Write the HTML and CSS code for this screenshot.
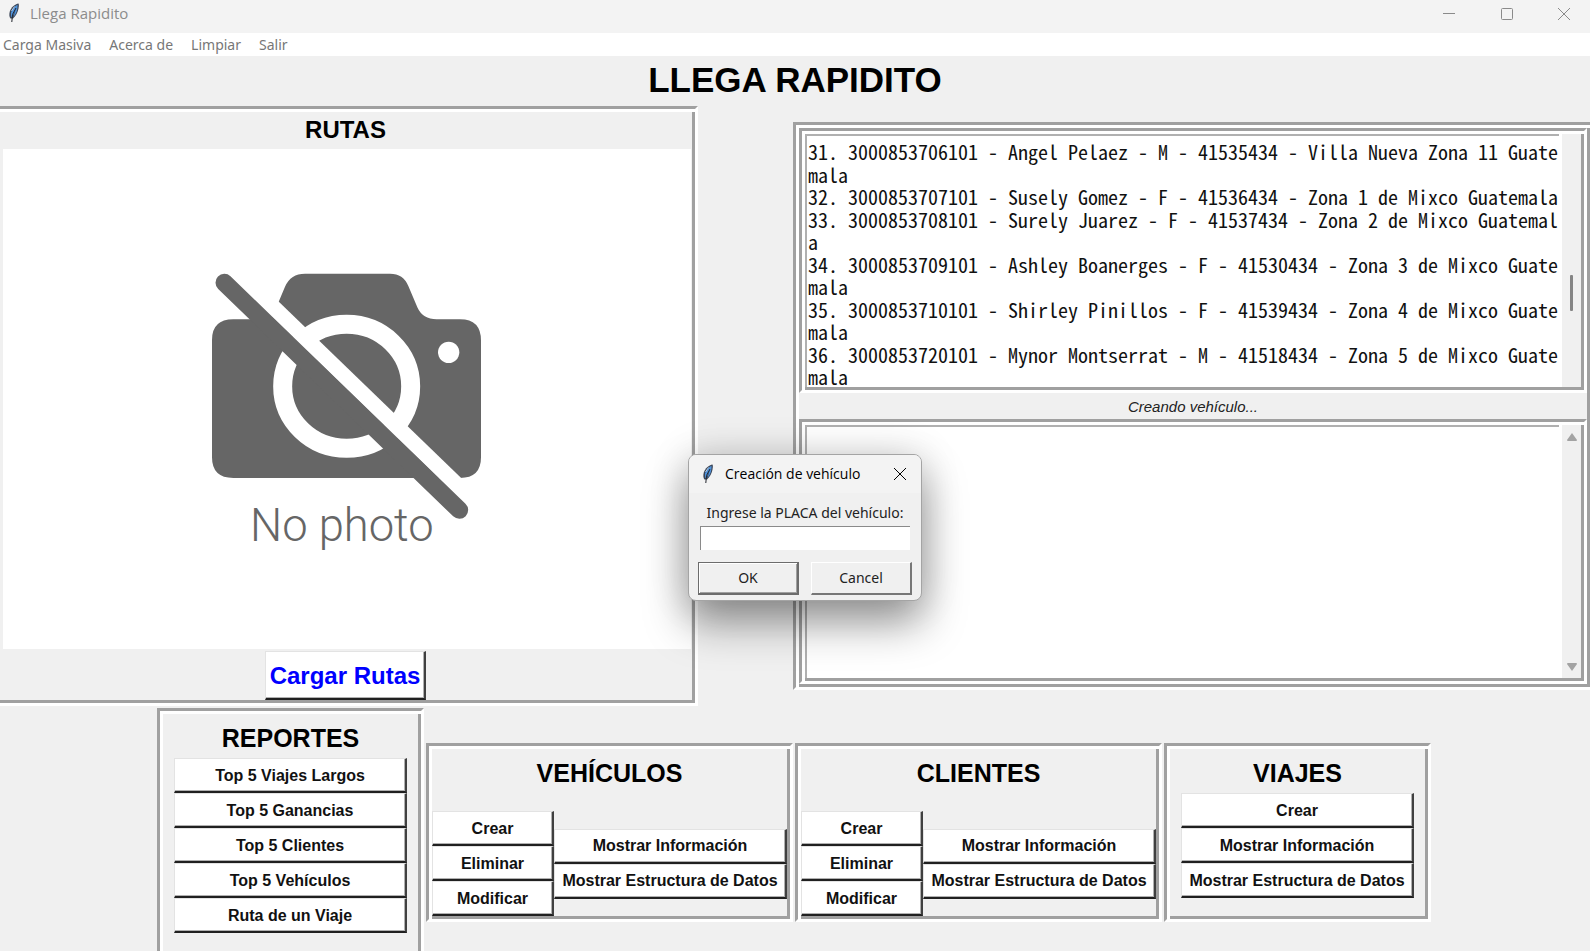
FILE: index.html
```html
<!DOCTYPE html>
<html lang="es">
<head>
<meta charset="utf-8">
<title>Llega Rapidito</title>
<link rel="stylesheet" href="styles.css">
</head>
<body>
<svg width="0" height="0" class="defs" aria-hidden="true">
  <symbol id="feather" viewBox="0 0 12 20">
    <path d="M10.500 .5C7 1 3 4.500 1.800 8.500C1 11.500 1.200 14 2.500 15.500L5 15.500C8 13 10 9 10.600 5C10.900 3 11 1.500 10.500 .5Z" fill="#3b4658"/>
    <path d="M9.500 1.800C7 3 4 6 3 9.500L3 13.500L4 14.500L8 5L5.500 14C8.500 11 9.800 6 9.500 1.800Z" fill="#4f93dc"/>
    <path d="M8 5L4.500 11.500L3.800 19" fill="none" stroke="#20242c" stroke-width="1"/>
    <path d="M6.500 3.500L3.500 8" stroke="#b9c6d6" stroke-width="1"/>
  </symbol>
</svg>

<header class="titlebar">
  <svg class="feather"><use href="#feather"/></svg>
  <span class="titlebar-text">Llega Rapidito</span>
  <div class="window-controls">
    <button aria-label="Minimizar"><svg width="12" height="12"><path d="M0 5.500H12"/></svg></button>
    <button aria-label="Maximizar"><svg width="12" height="12"><rect x=".5" y=".5" width="11" height="11" rx="1"/></svg></button>
    <button aria-label="Cerrar"><svg width="12" height="12"><path d="M0 0L12 12M12 0L0 12"/></svg></button>
  </div>
</header>
<nav class="menubar">
  <a href="#">Carga Masiva</a>
  <a href="#">Acerca de</a>
  <a href="#">Limpiar</a>
  <a href="#">Salir</a>
</nav>

<h1 class="app-title">LLEGA RAPIDITO</h1>

<main>
  <div class="top-row">
    <section class="routes frame">
      <h2>RUTAS</h2>
      <div class="photo">
        <svg width="330" height="320" viewBox="6 -33 990 960" role="img" aria-label="No photo">
          <path fill="#666" d="M96 270Q96 208 160 208H274L315 110Q332 71 375 71H630Q670 71 685 108L712 172Q728 208 770 208H840Q903 208 903 272V622Q903 684 840 684H160Q96 684 96 622Z"/>
          <ellipse cx="500" cy="409" rx="192" ry="186" fill="none" stroke="#fff" stroke-width="57"/>
          <circle cx="806" cy="307" r="32" fill="#fff"/>
          <path d="M97 -5L887 759" stroke="#fff" stroke-width="47"/>
          <path d="M133 98L838 780" stroke="#666" stroke-width="53" stroke-linecap="round"/>
          <text x="210" y="872" class="photo-text">No photo</text>
        </svg>
      </div>
      <button class="tk-button load">Cargar Rutas</button>
    </section>

    <section class="output frame">
      <div class="text-frame frame">
        <textarea class="console" aria-label="Datos" spellcheck="false" wrap="off">31. 3000853706101 - Angel Pelaez - M - 41535434 - Villa Nueva Zona 11 Guate
mala
32. 3000853707101 - Susely Gomez - F - 41536434 - Zona 1 de Mixco Guatemala
33. 3000853708101 - Surely Juarez - F - 41537434 - Zona 2 de Mixco Guatemal
a
34. 3000853709101 - Ashley Boanerges - F - 41530434 - Zona 3 de Mixco Guate
mala
35. 3000853710101 - Shirley Pinillos - F - 41539434 - Zona 4 de Mixco Guate
mala
36. 3000853720101 - Mynor Montserrat - M - 41518434 - Zona 5 de Mixco Guate
mala</textarea>
        <div class="scroll slim"><span class="thumb"></span></div>
      </div>
      <p class="status">Creando vehículo...</p>
      <div class="text-frame frame">
        <textarea class="console" aria-label="Estado" spellcheck="false"></textarea>
        <div class="scroll">
          <svg width="12" height="8"><path d="M6 0L11 7Q11 8 10 8H2Q1 8 1 7Z"/></svg>
          <svg width="12" height="8"><path d="M6 8L1 1Q1 0 2 0H10Q11 0 11 1Z"/></svg>
        </div>
      </div>
    </section>
  </div>

  <div class="bottom-row">
    <section class="panel padded frame">
      <h2>REPORTES</h2>
      <div class="stack">
        <button class="tk-button">Top 5 Viajes Largos</button>
        <button class="tk-button">Top 5 Ganancias</button>
        <button class="tk-button">Top 5 Clientes</button>
        <button class="tk-button">Top 5 Vehículos</button>
        <button class="tk-button">Ruta de un Viaje</button>
      </div>
    </section>
    <section class="panel frame">
      <h2>VEHÍCULOS</h2>
      <div class="pair">
        <div class="stack narrow">
          <button class="tk-button">Crear</button>
          <button class="tk-button">Eliminar</button>
          <button class="tk-button">Modificar</button>
        </div>
        <div class="stack">
          <button class="tk-button">Mostrar Información</button>
          <button class="tk-button">Mostrar Estructura de Datos</button>
        </div>
      </div>
    </section>
    <section class="panel frame">
      <h2>CLIENTES</h2>
      <div class="pair">
        <div class="stack narrow">
          <button class="tk-button">Crear</button>
          <button class="tk-button">Eliminar</button>
          <button class="tk-button">Modificar</button>
        </div>
        <div class="stack">
          <button class="tk-button">Mostrar Información</button>
          <button class="tk-button">Mostrar Estructura de Datos</button>
        </div>
      </div>
    </section>
    <section class="panel padded frame">
      <h2>VIAJES</h2>
      <div class="stack">
        <button class="tk-button">Crear</button>
        <button class="tk-button">Mostrar Información</button>
        <button class="tk-button">Mostrar Estructura de Datos</button>
      </div>
    </section>
  </div>
</main>

<form class="dialog" role="dialog" aria-labelledby="dialog-title">
  <div class="dialog-bar">
    <svg class="feather"><use href="#feather"/></svg>
    <span id="dialog-title">Creación de vehículo</span>
    <button type="button" aria-label="Cerrar"><svg width="12" height="12"><path d="M0 0L12 12M12 0L0 12"/></svg></button>
  </div>
  <div class="dialog-body">
    <label for="placa">Ingrese la PLACA del vehículo:</label>
    <input id="placa" type="text">
    <div class="dialog-actions">
      <button type="button" class="default">OK</button>
      <button type="button">Cancel</button>
    </div>
  </div>
</form>
</body>
</html>
```

FILE: styles.css
```css
* { box-sizing: border-box; }

body {
  margin: 0;
  min-height: 100vh;
  background: #f0f0f0;
  color: #000;
  font-family: "Liberation Sans", sans-serif;
  overflow: hidden;
}

h1, h2, p { margin: 0; }
button { font-family: inherit; margin: 0; }
.defs { position: absolute; }
.feather { width: 12px; height: 20px; flex: none; }

/* Window chrome */
.titlebar {
  display: flex;
  align-items: center;
  height: 33px;
  padding: 0 0 7px 8px;
  background: #f3f3f3;
  color: #8c8c8c;
  font: 15px/20px "Open Sans", sans-serif;
}
.titlebar-text { margin-left: 10px; }
.window-controls { display: flex; margin-left: auto; }
.window-controls button {
  display: grid;
  place-items: center;
  width: 58px;
  height: 28px;
  padding: 1px 5px 0 0;
  border: 0;
  background: none;
}
.window-controls button:last-child { width: 52px; padding: 1px 0 0; }
.window-controls svg { fill: none; stroke: #8a8a8a; }

.menubar {
  display: flex;
  gap: 18px;
  height: 23px;
  padding: 0 3px;
  background: #fff;
  font: 14px/24px "Noto Sans", sans-serif;
}
.menubar a { color: #777; text-decoration: none; }

.app-title {
  height: 50px;
  font-size: 35px;
  line-height: 48px;
  text-align: center;
}

/* Double bevel: dark then light on the top left, reversed on the bottom right */
.frame {
  border: 3px solid;
  border-color: #a0a0a0 #fff #fff #a0a0a0;
  box-shadow: inset 3px 3px #fff, inset -3px -3px #a0a0a0;
  padding: 3px;
}

.top-row {
  display: grid;
  grid-template-columns: 698fr 797fr;
  column-gap: 95px;
  align-items: center;
}

.routes {
  display: flex;
  flex-direction: column;
  align-items: center;
  padding: 3px 4px 3px 0;
  border-left: 0;
  box-shadow: inset 0 3px #fff, inset -3px -3px #a0a0a0;
}
.routes h2 { height: 37px; font-size: 24px; line-height: 35px; }
.photo {
  display: grid;
  place-items: center;
  align-self: stretch;
  height: 500px;
  margin-left: 3px;
  background: #fff;
}
.photo-text { font: 300 136px Roboto, sans-serif; fill: #666; }

.tk-button {
  height: 35px;
  padding: 1px 4px 0;
  border: solid;
  border-width: 1px 2px 2px 1px;
  border-color: #e3e3e3 #404040 #202020 #e3e3e3;
  box-shadow: inset -1px -1px #b0b0b0;
  background: #fff;
  color: #111;
  font-size: 16px;
  font-weight: bold;
  white-space: nowrap;
}
.tk-button.load {
  height: 49px;
  margin-top: 2px;
  color: #00f;
  font-size: 24px;
}

.output { border-right-width: 0; }
.text-frame { display: flex; height: 265px; background: #fff; }
.console {
  flex: 1;
  min-width: 0;
  margin: 0 3px 0 0;
  padding: 5px 0 0 1px;
  border: solid #b0b0b0;
  border-width: 2px 0 0 2px;
  outline: 0;
  background: #fff;
  color: #111;
  font-family: "Noto Sans Mono CJK SC", "Liberation Mono", monospace;
  font-size: 20px;
  line-height: 1.125;
  white-space: pre;
  resize: none;
  overflow: hidden;
}
.scroll {
  display: flex;
  flex-direction: column;
  align-items: center;
  justify-content: space-between;
  width: 19px;
  padding: 8px 0 7px;
  background: #f0f0f0;
  fill: #a3a3a3;
}
.scroll.slim { padding: 141px 0 0; }
.thumb { width: 3px; height: 36px; border-radius: 1px; background: #858585; }
.status {
  height: 26px;
  font-size: 15px;
  line-height: 28px;
  font-style: italic;
  text-align: center;
  color: #222;
}

/* Action panels */
.bottom-row {
  display: flex;
  justify-content: center;
  align-items: center;
  gap: 2px;
  margin-top: 2px;
  padding-right: 2px;
}
.panel h2 {
  font-size: 25px;
  line-height: 44px;
  padding-top: 2px;
  height: 44px;
  text-align: center;
}
.stack { display: flex; flex-direction: column; width: 233px; }
.stack.narrow { width: 122px; }
.padded { padding: 3px 14px 21px; }
.pair { display: flex; align-items: center; margin-top: 18px; }

/* Prompt window */
.dialog {
  position: absolute;
  left: 688px;
  top: 454px;
  width: 234px;
  border: 1px solid #a4a4a4;
  border-radius: 8px;
  background: #f0f0f0;
  box-shadow: 0 22px 44px rgba(0, 0, 0, .4), 0 0 40px rgba(0, 0, 0, .14);
  overflow: hidden;
}
.dialog-bar {
  display: flex;
  align-items: center;
  height: 38px;
  padding: 0 9px 0 13px;
  background: #f3f3f3;
  font: 14px/20px "Open Sans", sans-serif;
}
.dialog-bar span { margin-left: 11px; }
.dialog-bar button {
  display: grid;
  place-items: center;
  width: 24px;
  height: 24px;
  margin-left: auto;
  padding: 0;
  border: 0;
  background: none;
}
.dialog-bar button svg { stroke: #000; }
.dialog-body {
  display: flex;
  flex-direction: column;
  padding: 9px 9px 5px;
  font: 14px/22px "Noto Sans", sans-serif;
}
.dialog-body label { text-align: center; white-space: nowrap; color: #222; }
.dialog-body input {
  height: 24px;
  margin: 2px;
  border: solid;
  border-width: 1px 0 0 1px;
  border-color: #8a8a8a;
  outline: 0;
  background: #fff;
}
.dialog-actions { display: flex; justify-content: space-between; margin-top: 10px; }
.dialog-actions button {
  width: 101px;
  height: 33px;
  padding: 0 6px 2px;
  border: solid;
  border-width: 1px 2px 2px 1px;
  border-color: #fff #777 #777 #fff;
  background: #f0f0f0;
  color: #222;
  font-size: 14px;
}
.dialog-actions .default { border-color: #6c6c6c; box-shadow: inset 1px 1px #fff, inset -1px -1px #a0a0a0; }
```
